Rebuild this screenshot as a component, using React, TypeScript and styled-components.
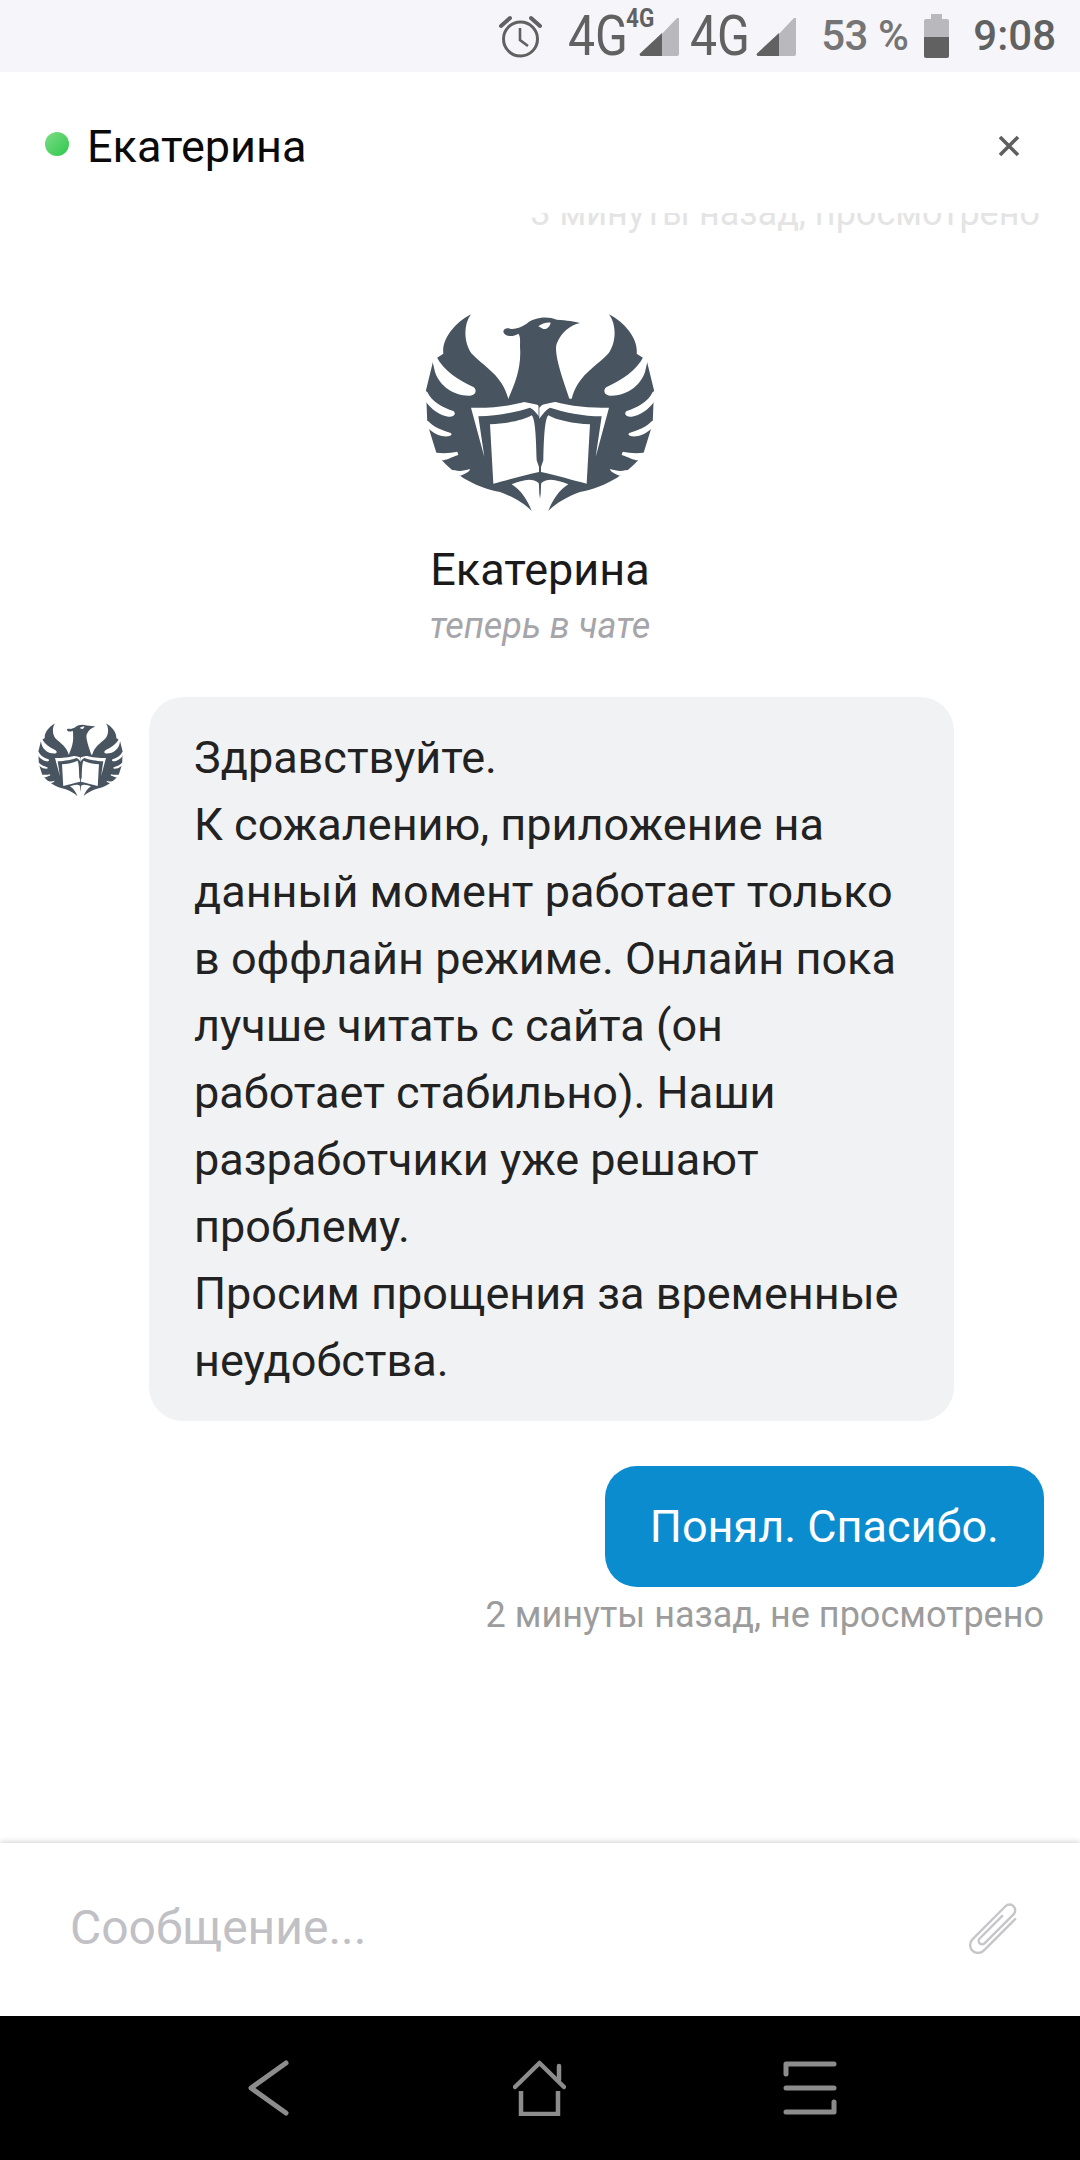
import React from "react";
import styled, { createGlobalStyle } from "styled-components";

const Global = createGlobalStyle`
  html, body { margin: 0; padding: 0; background: #fff; }
  body { font-family: Roboto, "Noto Sans", sans-serif; }
`;

const Page = styled.div`
  width: 1080px;
  height: 2160px;
  display: flex;
  flex-direction: column;
  overflow: hidden;
  background: #fff;
`;

const StatusBar = styled.div`
  height: 72px;
  flex: none;
  background: #f5f5fa;
  display: flex;
  align-items: center;
  justify-content: flex-end;
  padding-right: 24px;
  color: #616161;
`;

const AlarmIcon = styled.svg`
  width: 45px;
  height: 44px;
  margin-right: 25px;
`;

const NetworkLabel = styled.span`
  width: 56px;
  font-size: 56px;
  line-height: 56px;
  font-weight: 400;
  display: inline-block;
  transform: scaleX(0.86);
  transform-origin: left center;
`;

const Network = styled.div<{ $gap: number }>`
  position: relative;
  display: flex;
  align-items: center;
  margin-right: ${(p) => p.$gap}px;
`;

const NetworkTag = styled.span`
  position: absolute;
  left: 58px;
  top: -2px;
  font-size: 25px;
  line-height: 25px;
  font-weight: 700;
  transform: scaleX(0.9);
  transform-origin: left center;
`;

const Signal = styled.svg<{ $left: number }>`
  width: 40px;
  height: 40px;
  margin-left: ${(p) => p.$left}px;
`;

const Percent = styled.span`
  font-size: 42px;
  line-height: 44px;
  font-weight: 500;
  color: #757575;
  margin-right: 16px;
  letter-spacing: -0.5px;
`;

const BatteryIcon = styled.svg`
  width: 25px;
  height: 44px;
  margin-right: 24px;
`;

const Clock = styled.span`
  font-size: 42px;
  line-height: 44px;
  font-weight: 500;
`;

const Header = styled.header`
  height: 141px;
  flex: none;
  display: flex;
  align-items: flex-start;
  padding: 60px 60px 0 45px;
  box-sizing: border-box;
`;

const OnlineDot = styled.span`
  width: 24px;
  height: 24px;
  border-radius: 50%;
  background: linear-gradient(135deg, #7fdc85, #2cc84f);
  flex: none;
  margin-right: 18px;
`;

const HeaderName = styled.div`
  flex: 1;
  font-size: 45px;
  line-height: 48px;
  margin-top: -9px;
  color: #0a0a0a;
`;

const CloseIcon = styled.svg`
  width: 22px;
  height: 22px;
  margin-top: 3px;
`;

const Scroller = styled.main`
  flex: 1;
  min-height: 0;
  overflow: hidden;
  display: flex;
  flex-direction: column;
  justify-content: flex-end;
  padding: 0 36px 208px 38px;
`;

const FadedStamp = styled.div`
  flex: none;
  text-align: right;
  font-size: 36px;
  line-height: 40px;
  color: #e4e4e4;
  padding-right: 4px;
  margin-bottom: 80px;
`;

const Hero = styled.section`
  flex: none;
  display: flex;
  flex-direction: column;
  align-items: center;
  margin-bottom: 51px;
  margin-right: 2px;
`;

const LogoSvg = styled.svg<{ $w: number; $h: number }>`
  width: ${(p) => p.$w}px;
  height: ${(p) => p.$h}px;
  flex: none;
  display: block;
`;

const HeroName = styled.div`
  font-size: 45px;
  line-height: 48px;
  color: #1a1a1a;
  margin-top: 33px;
`;

const HeroSub = styled.div`
  font-size: 36px;
  line-height: 40px;
  font-style: italic;
  color: #a5a5aa;
  margin-top: 12px;
`;

const IncomingRow = styled.div`
  flex: none;
  display: flex;
  gap: 26px;
  align-items: flex-start;
  margin-bottom: 45px;
`;

const AvatarSlot = styled.div`
  margin-top: 26px;
  flex: none;
`;

const IncomingBubble = styled.div`
  width: 805px;
  box-sizing: border-box;
  padding: 27px 30px 27px 45px;
  border-radius: 34px;
  background: #f1f2f4;
  font-size: 45px;
  line-height: 67px;
  color: #222;
`;

const OutgoingBubble = styled.div`
  flex: none;
  align-self: flex-end;
  padding: 27px 45px;
  border-radius: 32px;
  background: #0b8ccf;
  color: #fff;
  font-size: 45px;
  line-height: 67px;
`;

const Stamp = styled.div`
  flex: none;
  align-self: flex-end;
  font-size: 36px;
  line-height: 40px;
  color: #9c9c9c;
  margin-top: 8px;
`;

const Composer = styled.footer`
  height: 173px;
  flex: none;
  box-sizing: border-box;
  display: flex;
  align-items: center;
  padding: 0 58px 0 70px;
  background: #fff;
  box-shadow: 0 -1px 6px rgba(0, 0, 0, 0.18);
  position: relative;
`;

const Placeholder = styled.div`
  flex: 1;
  font-size: 48px;
  color: #c0c0c5;
  margin-bottom: 4px;
`;

const ClipIcon = styled.svg`
  width: 54px;
  height: 52px;
  margin-bottom: 3px;
`;

const NavBar = styled.nav`
  height: 144px;
  flex: none;
  background: #000;
  display: flex;
  align-items: center;
  justify-content: center;
  gap: 217px;
  padding-left: 5px;
`;

const NavIcon = styled.svg<{ $lead?: number }>`
  height: 56px;
  display: block;
  margin-left: ${(p) => p.$lead ?? 0}px;
`;

const Logo = ({ w, h }: { w: number; h: number }) => {
  const half = (
    <>
      <path
        fill="#48545f"
        d="M243 72C190 100 155 150 160 190L130 210L108 300L112 400L140 490C180 545 250 590 330 605C370 620 405 640 425 662C415 635 395 600 365 582C395 570 425 560 446 578L452 625L455 300L360 325L355 325C335 255 290 235 250 195C225 170 215 110 243 72Z"
      />
      <path fill="#fff" d="M120 190L140 200C160 240 205 270 250 290C262 298 258 315 240 316C195 318 150 290 135 245L128 215Z" />
      <path fill="#fff" d="M95 295L112 305C125 335 160 352 190 362C200 370 192 381 175 379C150 375 125 358 108 335Z" />
      <path fill="#fff" d="M95 385L115 393C130 410 160 422 182 428C190 434 180 440 160 438C140 435 122 422 108 408Z" />
      <path fill="#fff" d="M120 483L140 487C160 490 185 488 202 484L205 494C185 500 170 510 155 510C140 505 130 500 120 490Z" />
      <path fill="#fff" d="M175 538L195 540C210 545 225 540 240 536C238 546 225 550 212 556C195 552 185 548 175 544Z" />
      <path
        fill="#fff"
        d="M243 352C300 355 380 345 420 330C435 335 445 345 452 352L452 385C440 368 432 358 420 352C380 365 320 378 265 378L283 500Z"
      />
      <path
        fill="#fff"
        d="M300 402C350 400 400 390 425 375C435 385 438 430 440 510L447 530L447 545C400 555 350 570 310 580Z"
      />
    </>
  );
  return (
    <LogoSvg $w={w} $h={h} viewBox="105 68 690 600">
      {half}
      <g transform="translate(900 0) scale(-1 1)">{half}</g>
      <path
        fill="#48545f"
        d="M340 125C340 115 350 112 360 115C375 118 395 110 410 100C430 82 470 75 500 88C530 90 555 93 570 98C540 105 515 125 500 160C490 190 520 270 538 325L450 345L355 325C375 280 395 230 390 170C390 150 392 140 385 130C370 140 345 140 340 125Z"
      />
      <path fill="#fff" d="M445 108C455 100 470 95 482 97C480 108 470 118 460 116Z" />
    </LogoSvg>
  );
};

const SignalGlyph = ({ left }: { left: number }) => (
  <Signal $left={left} viewBox="0 0 40 40">
    <path fill="#b9b9bd" d="M40 2V38a2 2 0 0 1-2 2H2L38 2z" />
    <path fill="#616161" d="M23 17V40H2a1.5 1.5 0 0 1-1-2.5z" />
  </Signal>
);

export default function App() {
  return (
    <Page>
      <Global />
      <StatusBar>
        <AlarmIcon viewBox="0 0 45 44" fill="none" stroke="#616161">
          <circle cx="22.5" cy="25" r="17" strokeWidth="3" />
          <path d="M22 14V26L30 32" strokeWidth="2.6" />
          <path d="M3 12L12 4M42 12L33 4" strokeWidth="4" strokeLinecap="round" />
        </AlarmIcon>
        <Network $gap={11}>
          <NetworkLabel>4G</NetworkLabel>
          <NetworkTag>4G</NetworkTag>
          <SignalGlyph left={15} />
        </Network>
        <Network $gap={25}>
          <NetworkLabel>4G</NetworkLabel>
          <SignalGlyph left={10} />
        </Network>
        <Percent>53 %</Percent>
        <BatteryIcon viewBox="0 0 25 44">
          <path fill="#b9b9bd" d="M7 0H18V5H23a2 2 0 0 1 2 2V23H0V7a2 2 0 0 1 2-2H7z" />
          <path fill="#616161" d="M0 23H25V42a2 2 0 0 1-2 2H2a2 2 0 0 1-2-2z" />
        </BatteryIcon>
        <Clock>9:08</Clock>
      </StatusBar>

      <Header>
        <OnlineDot />
        <HeaderName>Екатерина</HeaderName>
        <CloseIcon viewBox="0 0 22 22" stroke="#5f5f5f" strokeWidth="3.6" fill="none">
          <path d="M2 2L20 20M20 2L2 20" />
        </CloseIcon>
      </Header>

      <Scroller>
        <FadedStamp>3 минуты назад, просмотрено</FadedStamp>
        <Hero>
          <Logo w={230} h={200} />
          <HeroName>Екатерина</HeroName>
          <HeroSub>теперь в чате</HeroSub>
        </Hero>
        <IncomingRow>
          <AvatarSlot>
            <Logo w={85} h={74} />
          </AvatarSlot>
          <IncomingBubble>
            Здравствуйте.
            <br />
            К сожалению, приложение на данный момент работает только в оффлайн режиме. Онлайн пока лучше читать с сайта (он работает стабильно). Наши разработчики уже решают проблему.
            <br />
            Просим прощения за временные неудобства.
          </IncomingBubble>
        </IncomingRow>
        <OutgoingBubble>Понял. Спасибо.</OutgoingBubble>
        <Stamp>2 минуты назад, не просмотрено</Stamp>
      </Scroller>

      <Composer>
        <Placeholder>Сообщение...</Placeholder>
        <ClipIcon viewBox="0 0 54 52" fill="none" stroke="#c6c6ca" strokeWidth="2.4" strokeLinecap="round">
          <g transform="translate(27 26) rotate(45) scale(1.14) translate(-7 -28)">
            <path d="M14 10V49a7 7 0 0 1-14 0V8a5 5 0 0 1 10 0V44a3 3 0 0 1-6 0V16" strokeWidth="2.1" />
          </g>
        </ClipIcon>
      </Composer>

      <NavBar>
        <NavIcon viewBox="0 0 41 56" width="41" fill="none" stroke="#8c8c8c" strokeWidth="5" strokeLinecap="round" strokeLinejoin="round">
          <path d="M38 3L3 28L38 53" />
        </NavIcon>
        <NavIcon $lead={7} viewBox="0 0 53 56" width="53" fill="none" stroke="#8c8c8c" strokeWidth="4.5" strokeLinecap="round" strokeLinejoin="round">
          <path d="M2 27L26.5 3L51 27" />
          <path d="M46 6V20" />
          <path d="M8 31V54H45V31" strokeLinecap="butt" strokeLinejoin="miter" />
        </NavIcon>
        <NavIcon viewBox="0 0 54 56" width="54" fill="none" stroke="#8c8c8c" strokeWidth="5" strokeLinecap="round" strokeLinejoin="round">
          <path d="M3 14V4H51" />
          <path d="M3 28H51" />
          <path d="M3 52H51V42" />
        </NavIcon>
      </NavBar>
    </Page>
  );
}
